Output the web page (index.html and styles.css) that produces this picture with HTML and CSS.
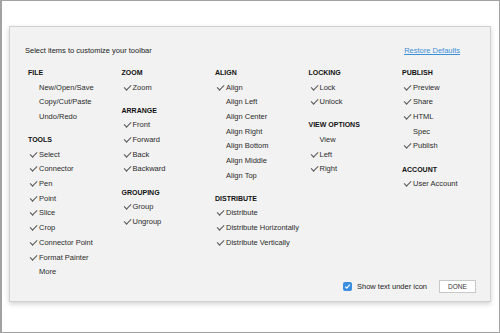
FILE: index.html
```html
<!DOCTYPE html>
<html lang="en">

<head>
    <meta charset="UTF-8">
    <meta name="viewport" content="width=device-width, initial-scale=1.0">
    <title>Customize Toolbar</title>
    <link rel="stylesheet" href="styles.css">
</head>

<body>
    <div class="frame">
        <div class="panel">
            <div class="panel-header">
                <span class="intro">Select items to customize your toolbar</span>
                <a href="#" class="restore">Restore Defaults</a>
            </div>

            <div class="columns">
                <div class="column">
                    <div class="group">
                        <h3>FILE</h3>
                        <div class="item">New/Open/Save</div>
                        <div class="item">Copy/Cut/Paste</div>
                        <div class="item">Undo/Redo</div>
                    </div>
                    <div class="group">
                        <h3>TOOLS</h3>
                        <div class="item on">Select</div>
                        <div class="item on">Connector</div>
                        <div class="item on">Pen</div>
                        <div class="item on">Point</div>
                        <div class="item on">Slice</div>
                        <div class="item on">Crop</div>
                        <div class="item on">Connector Point</div>
                        <div class="item on">Format Painter</div>
                        <div class="item">More</div>
                    </div>
                </div>

                <div class="column">
                    <div class="group">
                        <h3>ZOOM</h3>
                        <div class="item on">Zoom</div>
                    </div>
                    <div class="group">
                        <h3>ARRANGE</h3>
                        <div class="item on">Front</div>
                        <div class="item on">Forward</div>
                        <div class="item on">Back</div>
                        <div class="item on">Backward</div>
                    </div>
                    <div class="group">
                        <h3>GROUPING</h3>
                        <div class="item on">Group</div>
                        <div class="item on">Ungroup</div>
                    </div>
                </div>

                <div class="column">
                    <div class="group">
                        <h3>ALIGN</h3>
                        <div class="item on">Align</div>
                        <div class="item">Align Left</div>
                        <div class="item">Align Center</div>
                        <div class="item">Align Right</div>
                        <div class="item">Align Bottom</div>
                        <div class="item">Align Middle</div>
                        <div class="item">Align Top</div>
                    </div>
                    <div class="group">
                        <h3>DISTRIBUTE</h3>
                        <div class="item on">Distribute</div>
                        <div class="item on">Distribute Horizontally</div>
                        <div class="item on">Distribute Vertically</div>
                    </div>
                </div>

                <div class="column">
                    <div class="group">
                        <h3>LOCKING</h3>
                        <div class="item on">Lock</div>
                        <div class="item on">Unlock</div>
                    </div>
                    <div class="group">
                        <h3>VIEW OPTIONS</h3>
                        <div class="item">View</div>
                        <div class="item on">Left</div>
                        <div class="item on">Right</div>
                    </div>
                </div>

                <div class="column">
                    <div class="group">
                        <h3>PUBLISH</h3>
                        <div class="item on">Preview</div>
                        <div class="item on">Share</div>
                        <div class="item on">HTML</div>
                        <div class="item">Spec</div>
                        <div class="item on">Publish</div>
                    </div>
                    <div class="group">
                        <h3>ACCOUNT</h3>
                        <div class="item on">User Account</div>
                    </div>
                </div>
            </div>

            <div class="panel-footer">
                <label class="show-text">
                    <span class="checkbox">
                        <svg width="7" height="7" viewBox="0 0 7 7">
                            <path d="M1.2 3.6 L2.8 5.2 L5.8 1.6" fill="none" stroke="#fff" stroke-width="1.2" />
                        </svg>
                    </span>
                    Show text under icon
                </label>
                <button class="done-button">DONE</button>
            </div>
        </div>
    </div>
</body>

</html>
```

FILE: styles.css
```css
body {
    margin: 0;
    font-family: "Liberation Sans", Arial, sans-serif;
    background: #fff;
}

.frame {
    width: 500px;
    height: 333px;
    box-sizing: border-box;
    border: 1px solid #a2a2a2;
    border-left-width: 2px;
    padding: 25px 8px 0 7px;
    background: #fff;
}

.panel {
    height: 276px;
    box-sizing: border-box;
    background: #f2f2f2;
    border: 1px solid #d0d0d0;
    box-shadow: 0 2px 5px rgba(0, 0, 0, 0.18);
    display: flex;
    flex-direction: column;
}

.panel-header {
    display: flex;
    justify-content: space-between;
    align-items: center;
    padding: 19px 30px 0 15px;
    font-size: 7.5px;
    line-height: 9px;
    color: #222;
}

.restore {
    color: #3d8fd8;
    text-decoration: underline;
}

.columns {
    display: grid;
    grid-template-columns: repeat(5, 93.5px);
    padding: 11px 0 0 18px;
}

.group + .group {
    margin-top: 8.5px;
}

h3 {
    margin: 0;
    font-size: 7px;
    font-weight: bold;
    line-height: 14.5px;
    color: #111;
}

.item {
    font-size: 7.5px;
    line-height: 14.7px;
    color: #2b2b2b;
    padding-left: 11px;
    position: relative;
}

.item.on::before {
    content: "";
    position: absolute;
    left: 2px;
    top: 4px;
    width: 5.5px;
    height: 2.5px;
    border-left: 1px solid #555;
    border-bottom: 1px solid #555;
    transform: rotate(-45deg);
}

.panel-footer {
    margin-top: auto;
    display: flex;
    justify-content: flex-end;
    align-items: center;
    padding: 0 14px 8px 0;
}

.show-text {
    display: flex;
    align-items: center;
    gap: 5px;
    font-size: 7.5px;
    color: #222;
    margin-right: 12px;
}

.checkbox {
    width: 9px;
    height: 9px;
    border-radius: 2px;
    background: #3a8ee2;
    display: flex;
    align-items: center;
    justify-content: center;
}

.done-button {
    width: 37px;
    height: 13px;
    padding: 0;
    background: #fff;
    border: 1px solid #c8c8c8;
    font-family: inherit;
    font-size: 6.5px;
    color: #333;
}
```
